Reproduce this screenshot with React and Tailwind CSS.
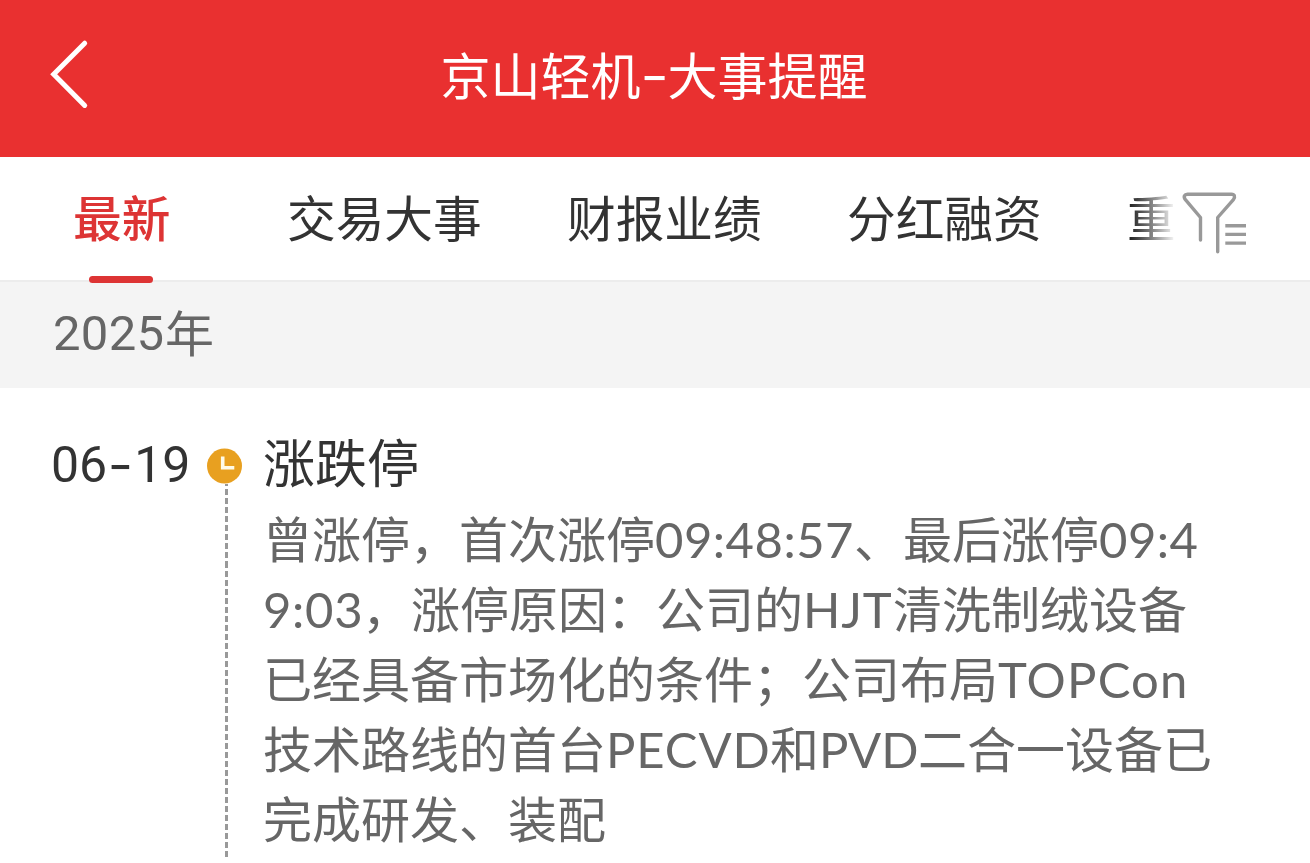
import React from "react";

const tabs = ["交易大事", "财报业绩", "分红融资"];

function Latin({ className, children }) {
  return (
    <span className={`inline-block whitespace-nowrap font-['Lato',sans-serif] leading-[49px] ${className}`}>
      {children}
    </span>
  );
}

function BackIcon() {
  return (
    <svg className="h-[70px] w-[44px]" viewBox="48 39 44 70" fill="none" stroke="#fff" strokeWidth="5" strokeLinecap="round">
      <path d="M84.700 43.200 53.700 74.300 84.700 105.400" />
    </svg>
  );
}

function FilterIcon() {
  return (
    <svg className="h-[66px] w-[68px]" viewBox="1181 190 68 66" fill="none" stroke="#999" strokeWidth="3.4" strokeLinecap="round" strokeLinejoin="round">
      <path d="M1200.500 240V217.500L1185.400 199.600C1183 196.500 1184.600 194.200 1187.500 194.200H1231.500C1234.400 194.200 1235.600 196.500 1233.400 199.600L1217.700 217.500V251.800" />
      <path strokeLinecap="butt" d="M1225.300 225.700H1246M1225.300 234.400H1246M1225.300 243.100H1246" />
    </svg>
  );
}

function ClockIcon() {
  return (
    <svg className="h-9 w-9" viewBox="0 0 36 36" fill="none">
      <circle cx="18.500" cy="18" r="17.500" fill="#e8a020" />
      <path d="M16.700 8.500V19.700H28.300" stroke="#fffbe8" strokeWidth="3.600" />
    </svg>
  );
}

export default function App() {
  return (
    <div className="flex h-[863px] w-[1310px] flex-col overflow-hidden bg-white font-['Noto_Sans_CJK_SC',sans-serif] text-[#333]">
      <header className="grid h-[157px] shrink-0 grid-cols-[1fr_auto_1fr] bg-[#e93030] text-white">
        <button aria-label="返回" className="mt-[39px] ml-12 h-[70px] w-[44px]">
          <BackIcon />
        </button>
        <h1 className="flex pt-[38px] pr-[2px] text-[50px] leading-[70px] font-normal">
          <span>京山轻机</span>
          <span className="w-[27px] scale-x-125 pt-[3px] text-center font-['Inter',sans-serif]">-</span>
          <span>大事提醒</span>
        </h1>
      </header>

      <nav className="relative flex h-[125px] shrink-0 border-b-2 border-[#ececec] bg-white pl-[73px] text-[48.700px] leading-[70px]">
        <div className="flex w-[214px] flex-col">
          <span className="mt-6 font-medium text-[#dd3434]">最新</span>
          <span className="relative z-10 mt-[25px] ml-4 h-[7px] w-[64px] shrink-0 rounded-full bg-[#dd3434]" />
        </div>
        {tabs.map((t) => (
          <span key={t} className="mt-6 w-[280px] whitespace-nowrap">{t}</span>
        ))}
        <span className="mt-6 h-[70px] w-[49px] bg-linear-to-r from-[#222] from-5% to-white to-100% bg-clip-text text-transparent">重</span>
        <button aria-label="筛选" className="mt-[33px] ml-[5px] h-[66px] w-[68px]">
          <FilterIcon />
        </button>
      </nav>

      <div className="flex h-[106px] shrink-0 bg-[#f4f4f4] pt-[14px] pl-[53px] text-[49px] leading-[70px] text-[#666]">
        <span className="w-[112px] pt-[3px] font-['Roboto',sans-serif] tracking-[0.3px]">2025</span>
        <span>年</span>
      </div>

      <section className="flex flex-1 pl-[51px]">
        <time className="mt-[42px] flex h-[70px] w-[155px] font-['Roboto',sans-serif] text-[50px] leading-[70px]">
          <span>06</span>
          <span className="w-[27px] scale-x-110 text-center font-['Inter',sans-serif]">-</span>
          <span>19</span>
        </time>
        <div className="flex w-[57px] flex-col pt-[60px]">
          <ClockIcon />
          <span className="ml-[19px] h-[373px] w-[3px] bg-[repeating-linear-gradient(to_bottom,#999_0px,#999_2px,transparent_2px,transparent_5px,#999_5px,#999_9.060px)]" />
        </div>
        <article>
          <h2 className="mt-[38px] text-[52px] leading-[70px] font-normal">涨跌停</h2>
          <p className="mt-[6px] text-[49px] leading-[70px] whitespace-nowrap text-[#666]">
            曾涨停，首次涨停<Latin className="w-[199px] tracking-[0.5px]">09:48:57</Latin>、最后涨停<Latin className="tracking-[0.5px]">09:4</Latin>
            <br />
            <Latin className="w-[99px] tracking-[0.7px]">9:03</Latin>，涨停原因：公司的<Latin className="w-[90px] tracking-[0.8px]">HJT</Latin>清洗制绒设备
            <br />
            已经具备市场化的条件；公司布局<Latin className="tracking-[1.2px]">TOPCon</Latin>
            <br />
            技术路线的首台<Latin className="w-[164px] tracking-[0.9px]">PECVD</Latin>和<Latin className="w-[99px]">PVD</Latin>二合一设备已
            <br />
            完成研发、装配
          </p>
        </article>
      </section>
    </div>
  );
}
